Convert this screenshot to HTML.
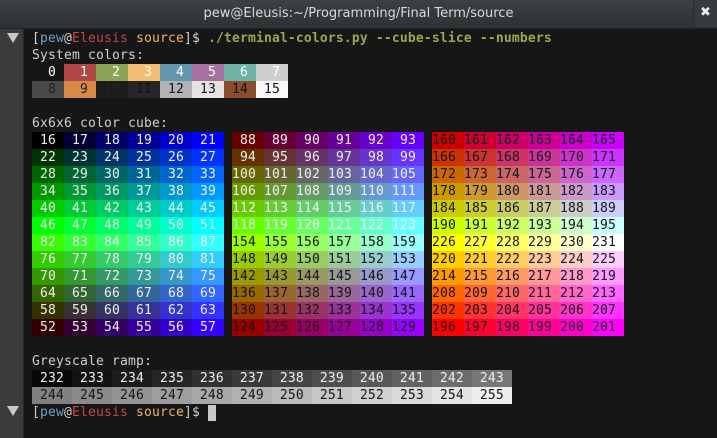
<!DOCTYPE html>
<html><head><meta charset="utf-8"><style>
*{margin:0;padding:0;box-sizing:border-box}
body{width:717px;height:438px;overflow:hidden;background:#161616;position:relative;font-family:"DejaVu Sans Mono","Liberation Mono",monospace}
#tb{position:absolute;left:0;top:0;width:717px;height:29px;background:linear-gradient(#3c4143,#2d3133);border-bottom:1px solid #1e2022}
#tt{position:absolute;left:0;right:0;top:6px;text-align:center;color:#dadada;font:13px "DejaVu Sans","Liberation Sans",sans-serif}
#cl{position:absolute;right:0;top:0;width:24px;height:27px;background:#353a3c;border-left:1px solid #2a2d2f;border-bottom-left-radius:4px;color:#eee;font:bold 13px "DejaVu Sans",sans-serif;text-align:center;line-height:26px}
#gut{position:absolute;left:0;top:29px;width:24px;height:409px;background:#3b3b3b;border-right:1px solid #2a2a2a}
.tri{position:absolute;left:7px;width:0;height:0;border-left:6px solid transparent;border-right:6px solid transparent;border-top:10px solid #c8c8c8}
#t{position:absolute;left:32px;top:30px;font-size:13px;letter-spacing:0.17px;line-height:17px;color:#d0d0d0}
#t div{height:17px;white-space:pre}
#t span{display:inline-block;height:17px;vertical-align:top}
#t span span{display:inline-block}
.w span{color:#f0f0f0}.k span{color:#141414}
.bl{color:#6aa5c8}.rd{color:#c04848}.or{color:#f0b462}.gr{color:#9aa84c;font-weight:bold}
</style></head><body>
<div id="tb"><div id="tt">pew@Eleusis:~/Programming/Final Term/source</div><div id="cl">✖</div></div>
<div id="gut"><div class="tri" style="top:4px"></div><div class="tri" style="top:377px"></div></div>
<div id="t">
<div>[<span class="bl">pew</span>@<span class="rd">Eleusis</span> <span class="or">source</span>]$ <span class="gr">./terminal-colors.py --cube-slice --numbers</span></div>
<div>System colors:</div>
<div><span style="color:#fff">  0 </span><span style="background:#b04848;color:#fff">  1 </span><span style="background:#8ca456;color:#fff">  2 </span><span style="background:#f2bd72;color:#fff">  3 </span><span style="background:#6596b0;color:#fff">  4 </span><span style="background:#a673a0;color:#fff">  5 </span><span style="background:#6fb2a6;color:#fff">  6 </span><span style="background:#cfcfcf;color:#fff">  7 </span></div>
<div><span style="background:#4a4a4a;color:#222">  8 </span><span style="background:#d88a46;color:#222">  9 </span><span style="background:#1c1c1c;color:#222"> 10 </span><span style="background:#262626;color:#111"> 11 </span><span style="background:#b3b3b3;color:#111"> 12 </span><span style="background:#e3e3e3;color:#111"> 13 </span><span style="background:#8a4e2e;color:#111"> 14 </span><span style="background:#f8f8f8;color:#111"> 15 </span></div>
<div></div>
<div>6x6x6 color cube:</div>
<div><span class="w"><span style="background:#000000"> 16 </span><span style="background:#000033"> 17 </span><span style="background:#000066"> 18 </span><span style="background:#000099"> 19 </span><span style="background:#0000cc"> 20 </span><span style="background:#0000ff"> 21 </span></span> <span class="w"><span style="background:#660000"> 88 </span><span style="background:#660033"> 89 </span><span style="background:#660066"> 90 </span><span style="background:#660099"> 91 </span><span style="background:#6600cc"> 92 </span><span style="background:#6600ff"> 93 </span></span> <span class="k"><span style="background:#cc0000">160 </span><span style="background:#cc0033">161 </span><span style="background:#cc0066">162 </span><span style="background:#cc0099">163 </span><span style="background:#cc00cc">164 </span><span style="background:#cc00ff">165 </span></span></div>
<div><span class="w"><span style="background:#003300"> 22 </span><span style="background:#003333"> 23 </span><span style="background:#003366"> 24 </span><span style="background:#003399"> 25 </span><span style="background:#0033cc"> 26 </span><span style="background:#0033ff"> 27 </span></span> <span class="w"><span style="background:#663300"> 94 </span><span style="background:#663333"> 95 </span><span style="background:#663366"> 96 </span><span style="background:#663399"> 97 </span><span style="background:#6633cc"> 98 </span><span style="background:#6633ff"> 99 </span></span> <span class="k"><span style="background:#cc3300">166 </span><span style="background:#cc3333">167 </span><span style="background:#cc3366">168 </span><span style="background:#cc3399">169 </span><span style="background:#cc33cc">170 </span><span style="background:#cc33ff">171 </span></span></div>
<div><span class="w"><span style="background:#006600"> 28 </span><span style="background:#006633"> 29 </span><span style="background:#006666"> 30 </span><span style="background:#006699"> 31 </span><span style="background:#0066cc"> 32 </span><span style="background:#0066ff"> 33 </span></span> <span class="w"><span style="background:#666600">100 </span><span style="background:#666633">101 </span><span style="background:#666666">102 </span><span style="background:#666699">103 </span><span style="background:#6666cc">104 </span><span style="background:#6666ff">105 </span></span> <span class="k"><span style="background:#cc6600">172 </span><span style="background:#cc6633">173 </span><span style="background:#cc6666">174 </span><span style="background:#cc6699">175 </span><span style="background:#cc66cc">176 </span><span style="background:#cc66ff">177 </span></span></div>
<div><span class="w"><span style="background:#009900"> 34 </span><span style="background:#009933"> 35 </span><span style="background:#009966"> 36 </span><span style="background:#009999"> 37 </span><span style="background:#0099cc"> 38 </span><span style="background:#0099ff"> 39 </span></span> <span class="w"><span style="background:#669900">106 </span><span style="background:#669933">107 </span><span style="background:#669966">108 </span><span style="background:#669999">109 </span><span style="background:#6699cc">110 </span><span style="background:#6699ff">111 </span></span> <span class="k"><span style="background:#cc9900">178 </span><span style="background:#cc9933">179 </span><span style="background:#cc9966">180 </span><span style="background:#cc9999">181 </span><span style="background:#cc99cc">182 </span><span style="background:#cc99ff">183 </span></span></div>
<div><span class="w"><span style="background:#00cc00"> 40 </span><span style="background:#00cc33"> 41 </span><span style="background:#00cc66"> 42 </span><span style="background:#00cc99"> 43 </span><span style="background:#00cccc"> 44 </span><span style="background:#00ccff"> 45 </span></span> <span class="w"><span style="background:#66cc00">112 </span><span style="background:#66cc33">113 </span><span style="background:#66cc66">114 </span><span style="background:#66cc99">115 </span><span style="background:#66cccc">116 </span><span style="background:#66ccff">117 </span></span> <span class="k"><span style="background:#cccc00">184 </span><span style="background:#cccc33">185 </span><span style="background:#cccc66">186 </span><span style="background:#cccc99">187 </span><span style="background:#cccccc">188 </span><span style="background:#ccccff">189 </span></span></div>
<div><span class="w"><span style="background:#00ff00"> 46 </span><span style="background:#00ff33"> 47 </span><span style="background:#00ff66"> 48 </span><span style="background:#00ff99"> 49 </span><span style="background:#00ffcc"> 50 </span><span style="background:#00ffff"> 51 </span></span> <span class="w"><span style="background:#66ff00">118 </span><span style="background:#66ff33">119 </span><span style="background:#66ff66">120 </span><span style="background:#66ff99">121 </span><span style="background:#66ffcc">122 </span><span style="background:#66ffff">123 </span></span> <span class="k"><span style="background:#ccff00">190 </span><span style="background:#ccff33">191 </span><span style="background:#ccff66">192 </span><span style="background:#ccff99">193 </span><span style="background:#ccffcc">194 </span><span style="background:#ccffff">195 </span></span></div>
<div><span class="w"><span style="background:#33ff00"> 82 </span><span style="background:#33ff33"> 83 </span><span style="background:#33ff66"> 84 </span><span style="background:#33ff99"> 85 </span><span style="background:#33ffcc"> 86 </span><span style="background:#33ffff"> 87 </span></span> <span class="k"><span style="background:#99ff00">154 </span><span style="background:#99ff33">155 </span><span style="background:#99ff66">156 </span><span style="background:#99ff99">157 </span><span style="background:#99ffcc">158 </span><span style="background:#99ffff">159 </span></span> <span class="k"><span style="background:#ffff00">226 </span><span style="background:#ffff33">227 </span><span style="background:#ffff66">228 </span><span style="background:#ffff99">229 </span><span style="background:#ffffcc">230 </span><span style="background:#ffffff">231 </span></span></div>
<div><span class="w"><span style="background:#33cc00"> 76 </span><span style="background:#33cc33"> 77 </span><span style="background:#33cc66"> 78 </span><span style="background:#33cc99"> 79 </span><span style="background:#33cccc"> 80 </span><span style="background:#33ccff"> 81 </span></span> <span class="k"><span style="background:#99cc00">148 </span><span style="background:#99cc33">149 </span><span style="background:#99cc66">150 </span><span style="background:#99cc99">151 </span><span style="background:#99cccc">152 </span><span style="background:#99ccff">153 </span></span> <span class="k"><span style="background:#ffcc00">220 </span><span style="background:#ffcc33">221 </span><span style="background:#ffcc66">222 </span><span style="background:#ffcc99">223 </span><span style="background:#ffcccc">224 </span><span style="background:#ffccff">225 </span></span></div>
<div><span class="w"><span style="background:#339900"> 70 </span><span style="background:#339933"> 71 </span><span style="background:#339966"> 72 </span><span style="background:#339999"> 73 </span><span style="background:#3399cc"> 74 </span><span style="background:#3399ff"> 75 </span></span> <span class="k"><span style="background:#999900">142 </span><span style="background:#999933">143 </span><span style="background:#999966">144 </span><span style="background:#999999">145 </span><span style="background:#9999cc">146 </span><span style="background:#9999ff">147 </span></span> <span class="k"><span style="background:#ff9900">214 </span><span style="background:#ff9933">215 </span><span style="background:#ff9966">216 </span><span style="background:#ff9999">217 </span><span style="background:#ff99cc">218 </span><span style="background:#ff99ff">219 </span></span></div>
<div><span class="w"><span style="background:#336600"> 64 </span><span style="background:#336633"> 65 </span><span style="background:#336666"> 66 </span><span style="background:#336699"> 67 </span><span style="background:#3366cc"> 68 </span><span style="background:#3366ff"> 69 </span></span> <span class="k"><span style="background:#996600">136 </span><span style="background:#996633">137 </span><span style="background:#996666">138 </span><span style="background:#996699">139 </span><span style="background:#9966cc">140 </span><span style="background:#9966ff">141 </span></span> <span class="k"><span style="background:#ff6600">208 </span><span style="background:#ff6633">209 </span><span style="background:#ff6666">210 </span><span style="background:#ff6699">211 </span><span style="background:#ff66cc">212 </span><span style="background:#ff66ff">213 </span></span></div>
<div><span class="w"><span style="background:#333300"> 58 </span><span style="background:#333333"> 59 </span><span style="background:#333366"> 60 </span><span style="background:#333399"> 61 </span><span style="background:#3333cc"> 62 </span><span style="background:#3333ff"> 63 </span></span> <span class="k"><span style="background:#993300">130 </span><span style="background:#993333">131 </span><span style="background:#993366">132 </span><span style="background:#993399">133 </span><span style="background:#9933cc">134 </span><span style="background:#9933ff">135 </span></span> <span class="k"><span style="background:#ff3300">202 </span><span style="background:#ff3333">203 </span><span style="background:#ff3366">204 </span><span style="background:#ff3399">205 </span><span style="background:#ff33cc">206 </span><span style="background:#ff33ff">207 </span></span></div>
<div><span class="w"><span style="background:#330000"> 52 </span><span style="background:#330033"> 53 </span><span style="background:#330066"> 54 </span><span style="background:#330099"> 55 </span><span style="background:#3300cc"> 56 </span><span style="background:#3300ff"> 57 </span></span> <span class="k"><span style="background:#990000">124 </span><span style="background:#990033">125 </span><span style="background:#990066">126 </span><span style="background:#990099">127 </span><span style="background:#9900cc">128 </span><span style="background:#9900ff">129 </span></span> <span class="k"><span style="background:#ff0000">196 </span><span style="background:#ff0033">197 </span><span style="background:#ff0066">198 </span><span style="background:#ff0099">199 </span><span style="background:#ff00cc">200 </span><span style="background:#ff00ff">201 </span></span></div>
<div></div>
<div>Greyscale ramp:</div>
<div><span style="background:#080808;color:#f0f0f0"> 232 </span><span style="background:#121212;color:#f0f0f0"> 233 </span><span style="background:#1c1c1c;color:#f0f0f0"> 234 </span><span style="background:#262626;color:#f0f0f0"> 235 </span><span style="background:#303030;color:#f0f0f0"> 236 </span><span style="background:#3a3a3a;color:#f0f0f0"> 237 </span><span style="background:#444444;color:#f0f0f0"> 238 </span><span style="background:#4e4e4e;color:#f0f0f0"> 239 </span><span style="background:#585858;color:#f0f0f0"> 240 </span><span style="background:#626262;color:#f0f0f0"> 241 </span><span style="background:#6c6c6c;color:#f0f0f0"> 242 </span><span style="background:#767676;color:#f0f0f0"> 243 </span></div>
<div><span style="background:#808080;color:#141414"> 244 </span><span style="background:#8a8a8a;color:#141414"> 245 </span><span style="background:#949494;color:#141414"> 246 </span><span style="background:#9e9e9e;color:#141414"> 247 </span><span style="background:#a8a8a8;color:#141414"> 248 </span><span style="background:#b2b2b2;color:#141414"> 249 </span><span style="background:#bcbcbc;color:#141414"> 250 </span><span style="background:#c6c6c6;color:#141414"> 251 </span><span style="background:#d0d0d0;color:#141414"> 252 </span><span style="background:#dadada;color:#141414"> 253 </span><span style="background:#e4e4e4;color:#141414"> 254 </span><span style="background:#eeeeee;color:#141414"> 255 </span></div>
<div>[<span class="bl">pew</span>@<span class="rd">Eleusis</span> <span class="or">source</span>]$ <span style="background:#c8c8c8;height:16px;margin-top:1px"> </span></div>
</div>
</body></html>
